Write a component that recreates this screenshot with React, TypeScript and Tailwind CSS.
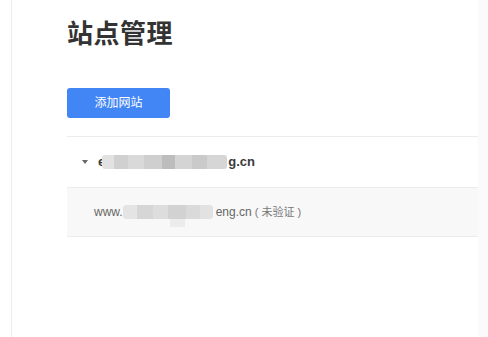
import * as React from 'react';

// Blurred (masked) part of the domain names, drawn as grey bands
const BLUR_MAIN = [
  { w: 12, c: '#e2e2e2' },
  { w: 14, c: '#d0d0d0' },
  { w: 16, c: '#d9d9d9' },
  { w: 18, c: '#cfcfcf' },
  { w: 13, c: '#bdbdbd' },
  { w: 17, c: '#d4d4d4' },
  { w: 15, c: '#cacaca' },
  { w: 20, c: '#d6d6d6' },
];

const BLUR_SUB = [
  { w: 14, c: '#e4e4e4' },
  { w: 16, c: '#d6d6d6' },
  { w: 15, c: '#dddddd' },
  { w: 18, c: '#d2d2d2' },
  { w: 14, c: '#dadada' },
  { w: 13, c: '#e2e2e2' },
];

function Blur({ bands, h }: { bands: { w: number; c: string }[]; h: number }) {
  return (
    <span className="inline-flex rounded-[3px] overflow-hidden blur-[0.6px]" style={{ height: h }}>
      {bands.map((b, i) => (
        <span key={i} style={{ width: b.w, background: b.c }} />
      ))}
    </span>
  );
}

export default function App() {
  return (
    <div
      className="flex h-[337px] w-[488px] bg-white text-[#333]"
      style={{ fontFamily: '"Liberation Sans", "Noto Sans CJK SC", sans-serif' }}
    >
      {/* left rail */}
      <div className="w-[12px] shrink-0 border-r border-[#ececec]" />

      {/* main */}
      <div className="flex-1 pl-[55px]">
        <h1 className="mt-[21px] text-[26px] leading-[26px] font-bold tracking-[0.5px] text-[#333]">
          站点管理
        </h1>

        <button className="mt-[41px] h-[30px] w-[103px] rounded-[3px] bg-[#4285f4] text-[12px] text-white">
          添加网站
        </button>

        <div className="mt-[18px] border-t border-[#ececec]">
          {/* domain row */}
          <div className="flex h-[51px] items-center border-b border-[#ececec] pl-[15px]">
            <span className="mr-[10px] h-0 w-0 border-x-[3px] border-t-[4px] border-x-transparent border-t-[#666]" />
            <span className="flex items-center text-[13px] font-bold text-[#3a3a3a]">
              <span>e</span>
              <span className="-ml-[3px] mr-[1px] flex">
                <Blur bands={BLUR_MAIN} h={14} />
              </span>
              <span>g.cn</span>
            </span>
          </div>

          {/* sub row */}
          <div className="flex h-[49px] items-center border-b border-[#ececec] bg-[#f8f8f8] pl-[27px] text-[12px] text-[#666]">
            <span>www.</span>
            <span className="relative flex">
              <Blur bands={BLUR_SUB} h={14} />
              <span className="absolute left-[47px] top-[14px] h-[8px] w-[15px] bg-[#ececec] blur-[0.6px]" />
            </span>
            <span className="ml-[3px]">eng.cn</span>
            <span className="ml-[3px] text-[11px] text-[#777]">( 未验证 )</span>
          </div>
        </div>
      </div>

      {/* right strip */}
      <div className="w-[10px] shrink-0 bg-[#fafafa]" />
    </div>
  );
}
